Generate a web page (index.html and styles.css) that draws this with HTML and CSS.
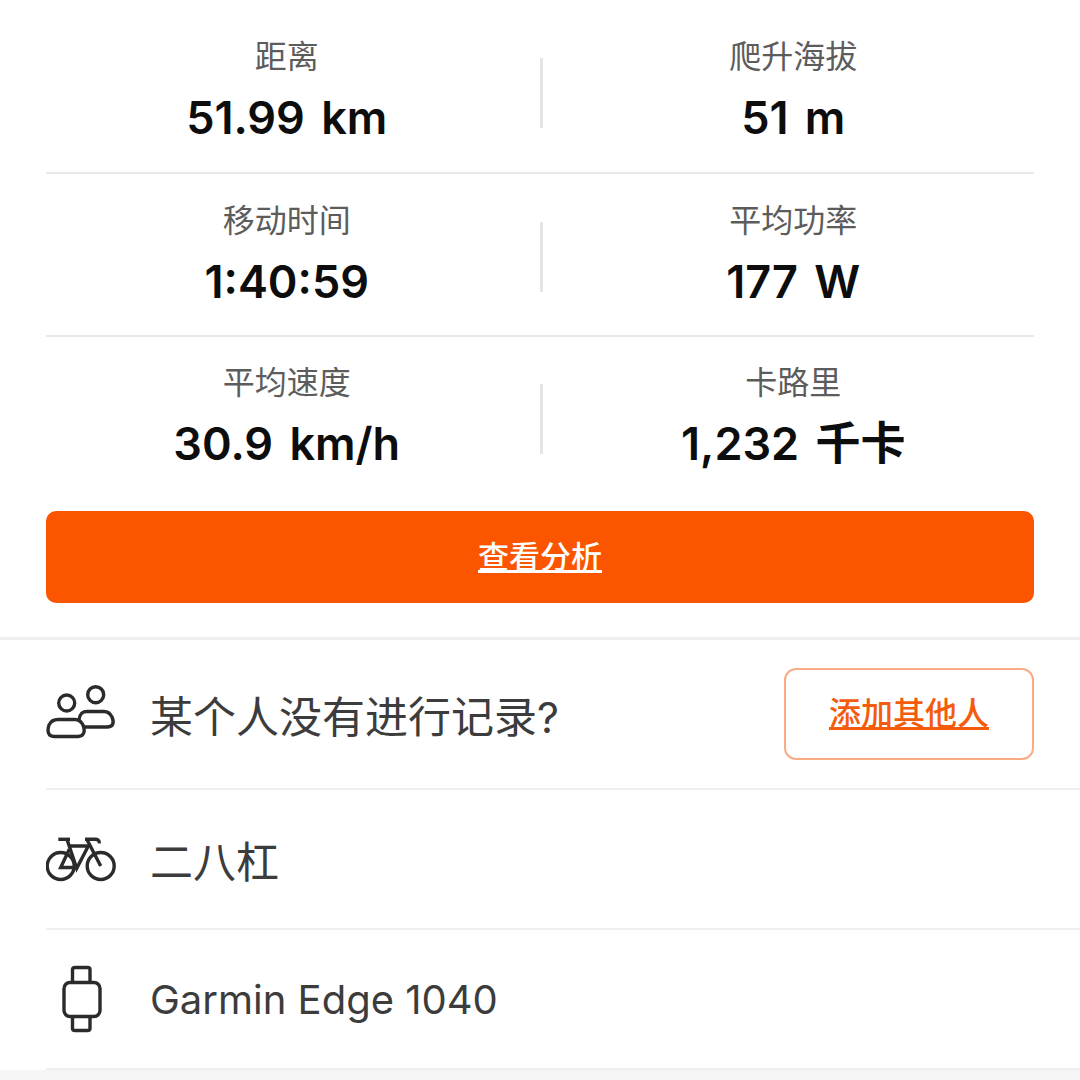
FILE: index.html
```html
<!DOCTYPE html>
<html>
<head>
  <title>活动统计</title>
  <link rel="stylesheet" href="styles.css">
</head>
<body>
  <div class="stats">
    <div class="stat-row">
      <div class="stat"><div class="stat-label">距离</div><div class="stat-value">51.99 km</div></div>
      <div class="stat-sep"></div>
      <div class="stat"><div class="stat-label">爬升海拔</div><div class="stat-value">51 m</div></div>
    </div>
    <div class="stat-row">
      <div class="stat"><div class="stat-label">移动时间</div><div class="stat-value">1:40:59</div></div>
      <div class="stat-sep"></div>
      <div class="stat"><div class="stat-label">平均功率</div><div class="stat-value">177 W</div></div>
    </div>
    <div class="stat-row last">
      <div class="stat"><div class="stat-label">平均速度</div><div class="stat-value">30.9 km/h</div></div>
      <div class="stat-sep"></div>
      <div class="stat"><div class="stat-label">卡路里</div><div class="stat-value">1,232 千卡</div></div>
    </div>
    <a class="analysis-btn">查看分析</a>
  </div>

  <div class="rows">
    <div class="row">
      <svg class="row-icon" viewBox="0 0 70 70" fill="none" stroke="#2b2b2b" stroke-width="3.4">
        <circle cx="20.700" cy="24" r="8"/>
        <circle cx="49.700" cy="15.700" r="8"/>
        <path d="M12 40.500H29C33 40.500 35 42 37 46C39.500 52 38 57.500 32 57.500H8C2 57.500 1 52 3 46C5 42 8 40.500 12 40.500Z"/>
        <path d="M33 40.500C34 35 36 32.500 41 32.500H58C62 32.500 64 34 66 38C68.500 44 67 48 61 48H38"/>
      </svg>
      <div class="row-text">某个人没有进行记录?</div>
      <a class="add-btn">添加其他人</a>
    </div>
    <div class="row">
      <svg class="row-icon" viewBox="0 0 70 70" fill="none" stroke="#2b2b2b" stroke-width="3.4">
        <circle cx="14.700" cy="42" r="13.500"/>
        <circle cx="54.700" cy="42" r="13.500"/>
        <path d="M12.300 15.300H24"/>
        <path d="M21.300 16.300L30.700 44.300L42.300 22H24"/>
        <path d="M23.300 25.300L14.700 43.500H30.700"/>
        <path d="M41.300 16.300L54.700 42"/>
        <path d="M39 15.300H49C52 15.300 53.500 16.500 53.300 19.300"/>
      </svg>
      <div class="row-text">二八杠</div>
    </div>
    <div class="row">
      <svg class="row-icon" viewBox="0 0 70 70" fill="none" stroke="#2b2b2b" stroke-width="3.4">
        <rect x="18" y="18.500" width="36" height="34" rx="6"/>
        <path d="M26.500 18.500V5.500C26.500 4 27.500 3.500 29 3.500H41.500C43 3.500 44 4 44 5.500V18.500"/>
        <path d="M26.500 52.500V64.500C26.500 66 27.500 66.500 29 66.500H41.500C43 66.500 44 66 44 64.500V52.500"/>
      </svg>
      <div class="row-text latin">Garmin Edge 1040</div>
    </div>
  </div>
  <div class="page-end"></div>
</body>
</html>
```

FILE: styles.css
```css
* {
  box-sizing: border-box;
}
html, body {
  height: 1080px;
  overflow: hidden;
}
body {
  margin: 0;
  background-color: #fff;
  color: #2b2b2b;
  font-family: "Inter", "Noto Sans CJK SC", sans-serif;
}
.stats {
  padding: 10px 46px 34px;
  border-bottom: 3px solid #efefef;
}
.stat-row {
  display: flex;
  align-items: center;
  height: 163px;
  padding-top: 4px;
  border-bottom: 2px solid #e9e9e9;
}
.stat-row:first-child {
  height: 164px;
}
.stat-row.last {
  height: 174px;
  padding-bottom: 14px;
  border-bottom: none;
}
.stat {
  flex: 1;
  padding-bottom: 2px;
  text-align: center;
}
.stat:first-child {
  padding-right: 12px;
}
.stat:last-child {
  padding-left: 10px;
}
.stat-sep {
  width: 3px;
  height: 70px;
  background-color: #e4e4e4;
}
.stat-label {
  font-size: 32px;
  line-height: 40px;
  color: #5c5c5c;
}
.stat-value {
  margin-top: 12px;
  font-size: 45px;
  line-height: 58px;
  font-weight: 600;
  word-spacing: 5px;
  color: #0d0d0d;
}
.analysis-btn {
  display: block;
  height: 92px;
  line-height: 92px;
  border-radius: 10px;
  background-color: #fc5500;
  color: #fff;
  text-align: center;
  font-size: 31px;
  font-weight: 500;
  text-decoration: underline;
}
.rows {
  padding-left: 46px;
}
.row {
  display: flex;
  align-items: center;
  height: 140px;
  border-bottom: 2px solid #efefef;
}
.row:first-child {
  height: 150px;
  padding-right: 46px;
}
.row-icon {
  width: 70px;
  height: 70px;
  flex-shrink: 0;
}
.row-text {
  flex: 1;
  margin-left: 34px;
  font-size: 43px;
  color: #3c3c3c;
}
.row-text.latin {
  font-size: 40px;
}
.add-btn {
  width: 250px;
  height: 92px;
  line-height: 88px;
  border: 2px solid #f9ab85;
  border-radius: 12px;
  color: #f35c0c;
  text-align: center;
  font-size: 32px;
  font-weight: 500;
  text-decoration: underline;
}
.page-end {
  height: 13px;
  background-color: #f5f5f5;
}
```
